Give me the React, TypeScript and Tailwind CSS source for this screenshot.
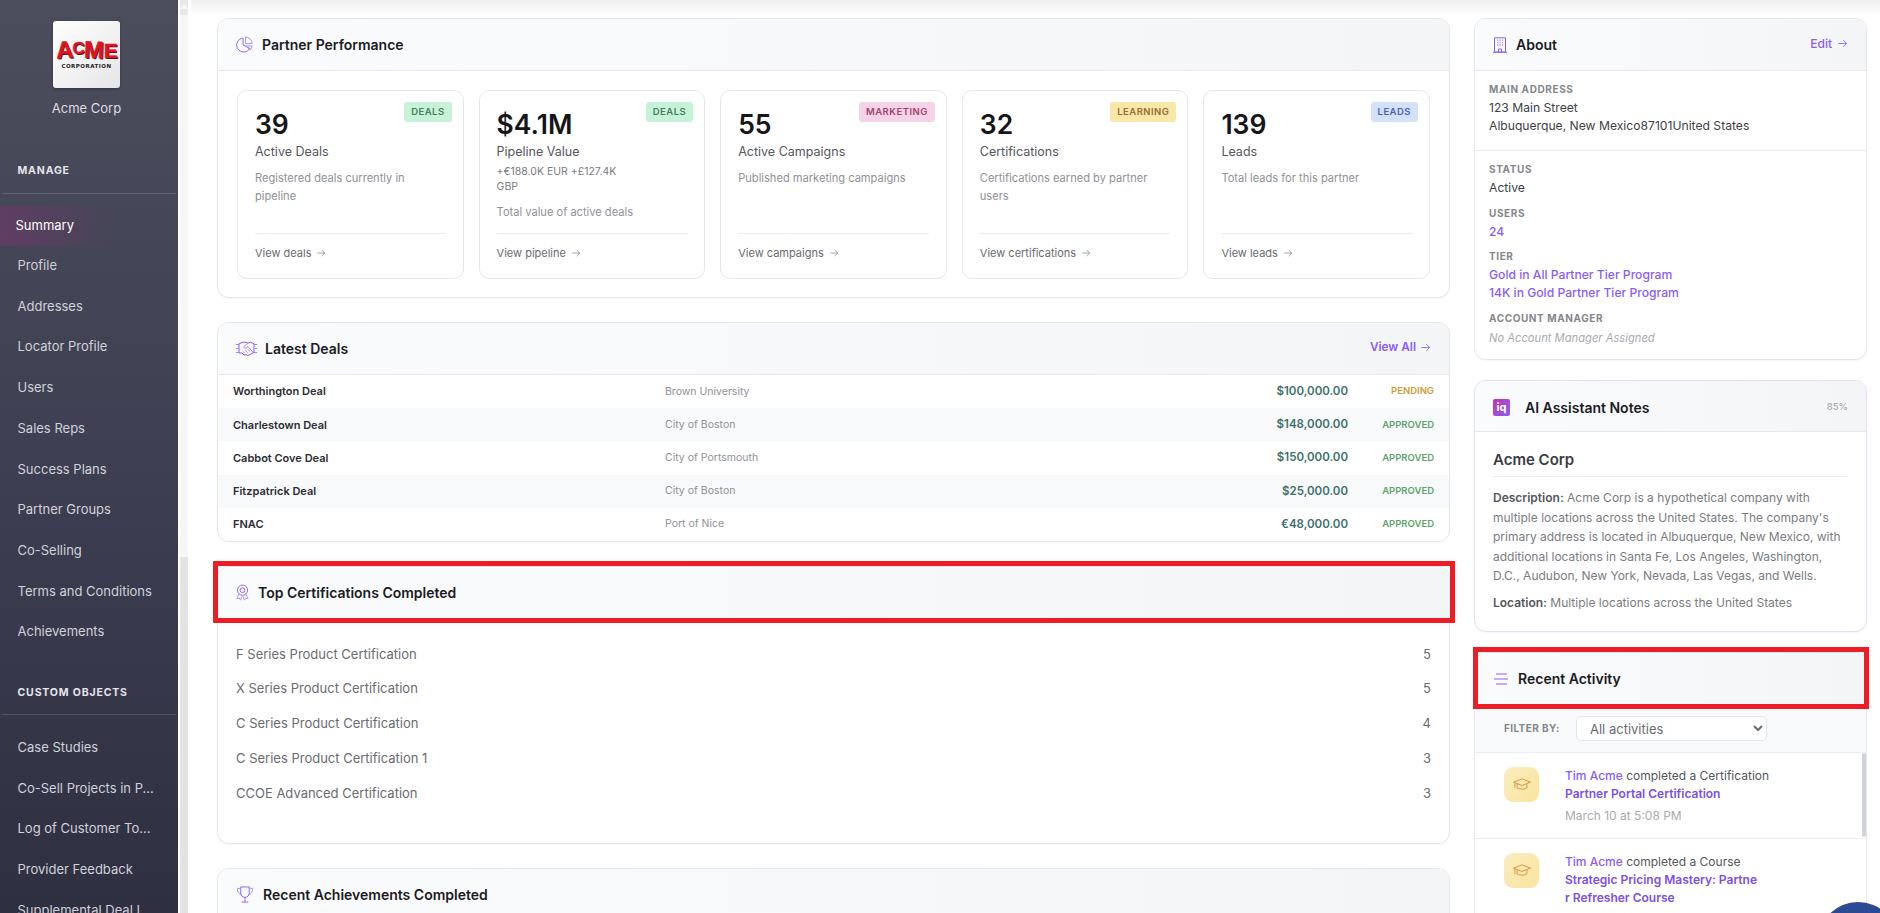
import React from "react";

const P = "#8b5cf6";
const Arrow = ({ className = "" }: { className?: string }) => (
  <svg viewBox="0 0 12 12" fill="none" stroke="currentColor" strokeWidth="0.9" className={className}>
    <path d="M1.5 6h9M6.8 2.3 10.5 6 6.8 9.7" />
  </svg>
);

const PieIcon = () => (
  <svg viewBox="0 0 18 18" fill="none" stroke={P} strokeWidth="1" className="w-[17px] h-[17px]">
    <path d="M7.5 2.2A7.4 7.4 0 1 0 14.6 13.2" />
    <path d="M7.5 2.2V9.4L14.6 13.2" />
    <path d="M10 1a7 7 0 0 1 7 7h-7z" stroke="#a78bfa" />
    <path d="M10.5 10.5h6.5a7 7 0 0 1-2 4.2z" stroke="#a78bfa" />
  </svg>
);
const HandshakeIcon = () => (
  <svg viewBox="0 0 21 15" fill="none" stroke={P} strokeWidth="1" className="w-[21px] h-[15px]">
    <path d="M0 3.5h3M0 7.5h2.4M0 11.5h3M21 3.5h-3M21 7.5h-2.4M21 11.5h-3" stroke="#a78bfa" />
    <path d="M3 2.8 7 1.2h3l2 1 2.5-1 3.5 1.6v8.4l-4.5 2.6-1.5.8-2-1-2 .4-2-2H3z" />
    <path d="M12 2.2 8 5.4c-.8 1.2.8 2.4 2 1.6l2-1.4 5 5.6" stroke="#a78bfa" />
    <path d="M7 10.5l1.5 1.5M9.5 9.5l2 2.2M12 8.5l1.8 2" stroke="#a78bfa" />
  </svg>
);
const AwardIcon = () => (
  <svg viewBox="0 0 14 18" fill="none" stroke={P} strokeWidth="1" className="w-[13px] h-[17px]">
    <circle cx="7" cy="6.5" r="5.5" />
    <circle cx="7" cy="6.5" r="2.6" />
    <path d="M3.2 10.8 1 15.5l2.6-.3 1.3 2 1.6-4M10.8 10.8l2.2 4.7-2.6-.3-1.3 2-1.6-4" stroke="#a78bfa" />
  </svg>
);
const TrophyIcon = () => (
  <svg viewBox="0 0 18 18" fill="none" stroke={P} strokeWidth="1" className="w-[18px] h-[17px]">
    <path d="M4.5 1h9v6.5a4.5 4.5 0 0 1-9 0z" />
    <path d="M4.5 2.5H.8c0 3.6 1.6 6 4.7 6.8M13.5 2.5h3.7c0 3.6-1.6 6-4.7 6.8" stroke="#a78bfa" />
    <path d="M9 12v4.5M5.5 17h7" />
  </svg>
);
const BuildingIcon = () => (
  <svg viewBox="0 0 14 16" fill="none" stroke={P} strokeWidth="1" className="w-[14px] h-[16px]">
    <path d="M1.5.8h11v14.4h-11zM0 15.2h14" />
    <path d="M5.5 15v-3h3v3" />
    <path d="M4.2 3.2h1.2M6.5 3.2h1.2M8.9 3.2h1.2M4.2 5.6h1.2M6.5 5.6h1.2M8.9 5.6h1.2M4.2 8h1.2M6.5 8h1.2M8.9 8h1.2" stroke="#a78bfa" strokeWidth="1.3" />
  </svg>
);
const BarsIcon = () => (
  <svg viewBox="0 0 16 12" fill="none" stroke={P} strokeWidth="1" className="w-[16px] h-[12px]">
    <path d="M3 1h11M1 6h14M3 11h11" />
  </svg>
);
const CapIcon = () => (
  <svg viewBox="0 0 20 16" fill="none" stroke="#d6933a" strokeWidth="1" className="w-[20px] h-[15px]">
    <path d="M10 2 1 5.5 10 9l9-3.5z" />
    <path d="M4.8 7.5v4c2.5 2 7.9 2 10.4 0v-4" />
    <path d="M2.5 6.2V12" />
  </svg>
);

const Card = ({ children, className = "" }: { children: React.ReactNode; className?: string }) => (
  <section className={`rounded-[12px] border border-[#e6e7ea] bg-white shadow-[0_1px_2px_rgba(0,0,0,0.04)] ${className}`}>{children}</section>
);
const Header = ({ children, right, h = "h-[52px]", extra = "" }: { children: React.ReactNode; right?: React.ReactNode; h?: string; extra?: string }) => (
  <header className={`relative flex ${h} items-center justify-between rounded-t-[12px] border-b border-[#e8e9ec] bg-gradient-to-r from-[#fafbfd] to-[#f4f5f7] pl-[18px] pr-[18px] ${extra}`}>
    <div className="flex items-center">{children}</div>
    {right}
  </header>
);
const Title = ({ children, className = "" }: { children: React.ReactNode; className?: string }) => (
  <h2 className={`text-[14px] font-semibold text-[#1b1b1f] ${className}`}>{children}</h2>
);

const stats = [
  { n: "39", l: "Active Deals", d: "Registered deals currently in pipeline", v: "View deals", b: "DEALS", c: "bg-[#c6f3d8] text-[#4e7a63]" },
  { n: "$4.1M", l: "Pipeline Value", s: "+€188.0K EUR +£127.4K GBP", d: "Total value of active deals", v: "View pipeline", b: "DEALS", c: "bg-[#c6f3d8] text-[#4e7a63]" },
  { n: "55", l: "Active Campaigns", d: "Published marketing campaigns", v: "View campaigns", b: "MARKETING", c: "bg-[#f5d3e8] text-[#a8416f]" },
  { n: "32", l: "Certifications", d: "Certifications earned by partner users", v: "View certifications", b: "LEARNING", c: "bg-[#f8e7a8] text-[#9a6a32]" },
  { n: "139", l: "Leads", d: "Total leads for this partner", v: "View leads", b: "LEADS", c: "bg-[#d3e1fb] text-[#4f5fbf]" },
];

const deals = [
  ["Worthington Deal", "Brown University", "$100,000.00", "PENDING"],
  ["Charlestown Deal", "City of Boston", "$148,000.00", "APPROVED"],
  ["Cabbot Cove Deal", "City of Portsmouth", "$150,000.00", "APPROVED"],
  ["Fitzpatrick Deal", "City of Boston", "$25,000.00", "APPROVED"],
  ["FNAC", "Port of Nice", "€48,000.00", "APPROVED"],
];

const certs: [string, number][] = [
  ["F Series Product Certification", 5],
  ["X Series Product Certification", 5],
  ["C Series Product Certification", 4],
  ["C Series Product Certification 1", 3],
  ["CCOE Advanced Certification", 3],
];

const manage = ["Profile", "Addresses", "Locator Profile", "Users", "Sales Reps", "Success Plans", "Partner Groups", "Co-Selling", "Terms and Conditions", "Achievements"];
const custom = ["Case Studies", "Co-Sell Projects in P...", "Log of Customer To...", "Provider Feedback", "Supplemental Deal I..."];

const NavItem = ({ children }: { children: React.ReactNode }) => (
  <a className="flex h-[40.7px] items-center whitespace-nowrap pl-[17.5px] text-[13px] text-[#d0d2d9]">{children}</a>
);
const NavHead = ({ children, className = "" }: { children: React.ReactNode; className?: string }) => (
  <div className={`mx-[2px] flex items-start border-b border-white/15 pl-[15.5px] text-[10.5px] font-bold tracking-[0.08em] text-[#e4e5ea] ${className}`}>{children}</div>
);

const Label = ({ children, className = "" }: { children: React.ReactNode; className?: string }) => (
  <div className={`text-[10px] font-bold leading-[14px] tracking-[0.06em] text-[#85868c] ${className}`}>{children}</div>
);

const Activity = ({ what, link, date, last }: { what: string; link: string; date?: string; last?: boolean }) => (
  <div className={`flex h-[86px] items-start pl-[29px] pt-[14px] ${last ? "" : "border-b border-[#eceef1]"}`}>
    <div className="flex h-[35px] w-[35px] shrink-0 items-center justify-center rounded-[9px] bg-gradient-to-br from-[#fbedc0] to-[#f9e49c]">
      <CapIcon />
    </div>
    <div className="ml-[26px] w-[196px] text-[12px] leading-[18px] text-[#55565c]">
      <div className="whitespace-nowrap">
        <span className="font-medium text-[#8b5cf6]">Tim Acme</span> completed a {what}
      </div>
      <div className="break-all font-semibold text-[#7c4fe8]">{link}</div>
      {date && <div className="mt-[4px] text-[#a9abb1]">{date}</div>}
    </div>
  </div>
);

export default function App() {
  return (
    <div className="relative flex h-[913px] w-[1880px] overflow-hidden bg-white [font-family:Inter,sans-serif]">
      <aside className="w-[178px] shrink-0 overflow-hidden bg-gradient-to-b from-[#4c4d5c] via-[#3e3f52] to-[#2e2f41]">
        <div className="flex flex-col items-center pr-[5px] pt-[21px]">
          <div className="flex h-[67px] w-[67px] flex-col items-center justify-center overflow-hidden rounded-[3px] bg-gradient-to-br from-white to-[#e6e6e8] shadow-[0_1px_3px_rgba(0,0,0,0.3)]">
            <div className="mt-[-1px] flex items-center text-[#e2131f] [font-family:'Liberation_Sans',sans-serif] font-bold leading-none tracking-[-0.5px] [text-shadow:1px_1px_0_#111] [-webkit-text-stroke:0.5px_#e2131f]">
              <span className="-rotate-3 text-[24px]">A</span>
              <span className="-mt-[3px] text-[17px]">C</span>
              <span className="rotate-2 text-[24px]">M</span>
              <span className="text-[21px]">E</span>
            </div>
            <div className="mt-[2px] whitespace-nowrap text-[5.5px] font-bold leading-none tracking-[0.09em] text-[#222] [font-family:'DejaVu_Sans',sans-serif]">CORPORATION</div>
          </div>
          <div className="mt-[11px] text-[13px] leading-[18px] text-[#dcdde2]">Acme Corp</div>
        </div>
        <NavHead className="mt-[46px] h-[31px]">MANAGE</NavHead>
        <div className="mt-[11.5px]">
          <a className="flex h-[40px] items-center bg-gradient-to-r from-[#6a3a68]/70 to-transparent to-[65%] pl-[15.5px] text-[13px] text-white">Summary</a>
          {manage.map((m) => (
            <NavItem key={m}>{m}</NavItem>
          ))}
        </div>
        <NavHead className="mt-[33px] h-[30px]">CUSTOM OBJECTS</NavHead>
        <div className="mt-[12px]">
          {custom.map((m) => (
            <NavItem key={m}>{m}</NavItem>
          ))}
        </div>
      </aside>

      <div className="flex w-[13px] shrink-0 flex-col bg-white pl-[2px] pr-[3px]">
        <div className="flex h-[15px] items-start justify-center bg-[#e9e9e9] pt-[4px]">
          <div className="h-0 w-0 border-x-[4px] border-b-[5px] border-x-transparent border-b-[#f8f8f8]" />
        </div>
        <div className="h-[542px] rounded-[2px] bg-[#f6f6f6]" />
        <div className="flex-1 bg-[#e3e3e3]" />
      </div>

      <div className="min-w-0 flex-1">
        <div className="h-[18px] bg-gradient-to-b from-[#efeff0] to-white to-[80%]" />
        <main className="grid grid-cols-[1233px_393px] gap-x-[24px] pl-[26px]">
          <div className="flex flex-col gap-[24px]">
            <Card>
              <Header>
                <PieIcon />
                <Title className="ml-[9px]">Partner Performance</Title>
              </Header>
              <div className="grid grid-cols-5 gap-[15px] px-[19px] pb-[18px] pt-[19px]">
                {stats.map((s) => (
                  <div key={s.l} className="relative flex h-[189px] flex-col rounded-[10px] border border-[#e6e7ea] px-[17px] pt-[16px]">
                    <span className={`absolute right-[11px] top-[11px] flex h-[20px] items-center rounded-[3px] px-[7px] text-[9.5px] font-semibold tracking-[0.05em] ${s.c}`}>{s.b}</span>
                    <div className="text-[26.5px] font-semibold leading-[34px] text-[#16161a]">{s.n}</div>
                    <div className="mt-[2px] text-[12.5px] leading-[18px] text-[#55565c]">{s.l}</div>
                    {s.s && <div className="mt-[3px] w-[140px] text-[10.5px] leading-[15px] text-[#7a7c83]">{s.s}</div>}
                    <div className={`${s.s ? "mt-[9px]" : "mt-[8px]"} text-[11.1px] leading-[18px] text-[#8f9198]`}>{s.d}</div>
                    <div className="mt-auto flex h-[45px] items-start gap-[5px] border-t border-[#eceef1] pt-[10px] text-[11px] leading-[18px] text-[#6a6b72]">
                      {s.v}
                      <Arrow className="mt-[4px] h-[10px] w-[10px] text-[#85868c]" />
                    </div>
                  </div>
                ))}
              </div>
            </Card>

            <Card>
              <Header
                right={
                  <a className="mt-[-2px] flex items-center gap-[4px] text-[11.8px] font-semibold text-[#8b5cf6]">
                    View All <Arrow className="h-[11px] w-[11px]" />
                  </a>
                }
              >
                <HandshakeIcon />
                <Title className="ml-[8px]">Latest Deals</Title>
              </Header>
              <div>
                {deals.map((d, i) => (
                  <div key={d[0]} className={`grid h-[33.2px] grid-cols-[432px_1fr_auto_86px] items-center pl-[15px] pr-[15px] ${i % 2 ? "bg-[#f8f9fb]" : ""} ${i === 4 ? "rounded-b-[12px]" : ""}`}>
                    <div className="text-[11px] font-semibold text-[#2b2c33]">{d[0]}</div>
                    <div className="text-[10.5px] text-[#8f9198]">{d[1]}</div>
                    <div className="text-[11.5px] font-semibold text-[#3c6f6b]">{d[2]}</div>
                    <div className={`text-right text-[9.5px] font-semibold ${d[3] === "PENDING" ? "text-[#cf9a3c]" : "text-[#5fa26a]"}`}>{d[3]}</div>
                  </div>
                ))}
              </div>
            </Card>

            <Card>
              <Header>
                <AwardIcon />
                <Title className="ml-[9px]">Top Certifications Completed</Title>
                <div className="pointer-events-none absolute -bottom-[5px] -left-[5px] -right-[6px] -top-[6px] border-[5px] border-[#ee1c25]" />
              </Header>
              <div className="flex h-[224px] flex-col px-[18px] pt-[18px]">
                {certs.map(([n, c]) => (
                  <div key={n} className="flex h-[34.8px] shrink-0 items-center justify-between text-[13px] text-[#6a6b72]">
                    <span>{n}</span>
                    <span>{c}</span>
                  </div>
                ))}
              </div>
            </Card>

            <Card>
              <Header>
                <TrophyIcon />
                <Title className="ml-[9px]">Recent Achievements Completed</Title>
              </Header>
              <div className="h-[60px]" />
            </Card>
          </div>

          <div className="flex flex-col gap-[20px]">
            <Card className="h-[342px]">
              <Header
                right={
                  <a className="mt-[-2px] flex items-center gap-[5px] text-[12px] font-medium text-[#8b5cf6]">
                    Edit <Arrow className="h-[11px] w-[11px]" />
                  </a>
                }
              >
                <BuildingIcon />
                <Title className="ml-[9px]">About</Title>
              </Header>
              <div className="h-[80px] border-b border-[#eceef1] px-[14px] pt-[11px]">
                <Label>MAIN ADDRESS</Label>
                <div className="mt-[3px] text-[12.15px] leading-[18px] text-[#3e3f46]">
                  123 Main Street
                  <br />
                  Albuquerque, New Mexico87101United States
                </div>
              </div>
              <div className="px-[14px] pt-[11px] text-[12.15px] leading-[18px] text-[#3e3f46]">
                <Label>STATUS</Label>
                <div className="mt-[3px]">Active</div>
                <Label className="mt-[9px]">USERS</Label>
                <div className="mt-[3px] font-medium text-[#8b5cf6]">24</div>
                <Label className="mt-[8px]">TIER</Label>
                <div className="mt-[3px] font-medium text-[#8b5cf6]">
                  Gold in All Partner Tier Program
                  <br />
                  14K in Gold Partner Tier Program
                </div>
                <Label className="mt-[9px]">ACCOUNT MANAGER</Label>
                <div className="mt-[4px] text-[11.2px] italic text-[#a9abb1]">No Account Manager Assigned</div>
              </div>
            </Card>

            <Card className="h-[252px] border-[#e7dcfd]">
              <Header h="h-[51px]" extra="pt-[3px]" right={<span className="text-[9.5px] font-medium text-[#a9abb1]">85%</span>}>
                <div className="flex h-[17px] w-[17px] items-center justify-center rounded-[2px] bg-gradient-to-br from-[#c02fb4] to-[#8a5cf0] text-[11px] font-bold leading-none text-white">iq</div>
                <Title className="ml-[15px]">AI Assistant Notes</Title>
              </Header>
              <div className="px-[18px] pt-[14px]">
                <div className="h-[31px] border-b border-[#ece7fb] text-[15px] font-semibold leading-[28px] text-[#3a3b44]">Acme Corp</div>
                <p className="mt-[11px] text-[12px] leading-[19.5px] text-[#7a7c83]">
                  <strong className="font-semibold text-[#55565c]">Description:</strong> Acme Corp is a hypothetical company with multiple locations across the United States. The company's primary address is located in Albuquerque, New Mexico, with additional locations in Santa Fe, Los Angeles, Washington, D.C., Audubon, New York, Nevada, Las Vegas, and Wells.
                </p>
                <p className="mt-[7px] text-[12px] leading-[19.5px] text-[#7a7c83]">
                  <strong className="font-semibold text-[#55565c]">Location:</strong> Multiple locations across the United States
                </p>
              </div>
            </Card>

            <Card>
              <Header>
                <BarsIcon />
                <Title className="ml-[9px]">Recent Activity</Title>
                <div className="pointer-events-none absolute -bottom-[5px] -left-[2px] -right-[3px] -top-[6px] border-[5px] border-[#ee1c25]" />
              </Header>
              <div className="flex h-[48px] items-center border-b border-[#eceef1] bg-[#f9fafb] pl-[29px]">
                <span className="w-[72px] text-[10px] font-bold tracking-[0.04em] text-[#85868c]">FILTER BY:</span>
                <select className="h-[25px] w-[191px] rounded-[5px] border border-[#e6e7ea] bg-white pl-[9px] text-[13px] text-[#6a6b72]">
                  <option>All activities</option>
                </select>
              </div>
              <div className="relative">
                <Activity what="Certification" link="Partner Portal Certification" date="March 10 at 5:08 PM" />
                <Activity what="Course" link="Strategic Pricing Mastery: Partner Refresher Course" last />
                <div className="absolute right-0 top-0 h-[84px] w-[4px] rounded-[2px] bg-[#cfd2d8]" />
              </div>
            </Card>
          </div>
        </main>
      </div>
      <div className="absolute left-[1818px] top-[902px] h-[80px] w-[80px] rounded-full bg-[#2c4a93]" />
    </div>
  );
}
